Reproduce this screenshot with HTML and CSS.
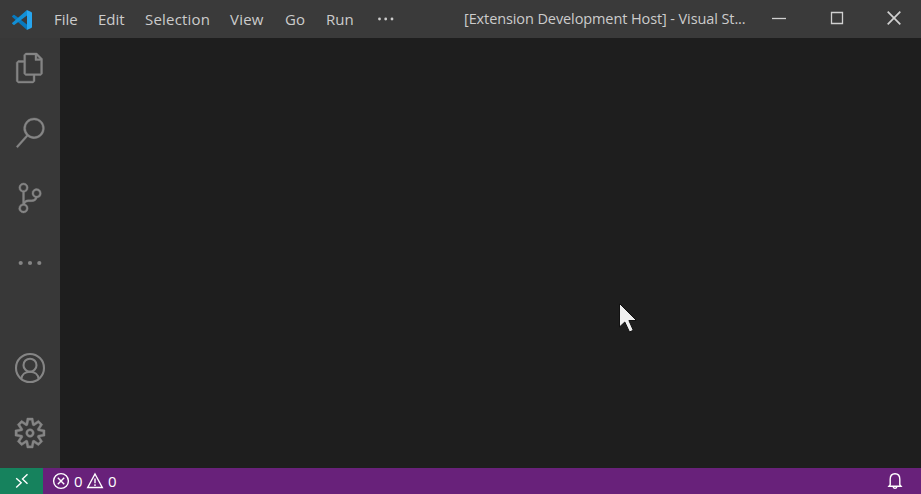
FILE: index.html
```
<!DOCTYPE html>
<html lang="en">
<head>
<meta charset="utf-8">
<title>Extension Development Host</title>
<link rel="stylesheet" href="styles.css">
</head>
<body>
<div class="window">
  <header class="titlebar">
    <svg class="logo" viewBox="0 0 20 20"><path fill="#0879be" d="M0 6.2 1.4 5Q2 4.7 2.6 5.1L15 14.5V20L.3 7Q0 6.6 0 6.2Z"/><path fill="#128fd5" d="M0 13.5 1.4 14.8Q2 15.2 2.6 14.7L15 5.5V0L.3 12.8Q0 13.1 0 13.5Z"/><path fill="#27a5ee" d="M14.8 0 19.3 2Q20 2.4 20 3V17Q20 17.6 19.3 18L14.8 20Q15 19.8 15 19V1Q15 .2 14.8 0Z"/></svg>
    <nav class="menu">
      <span class="file">File</span><span class="edit">Edit</span><span class="selection">Selection</span><span class="view">View</span><span class="go">Go</span><span class="run">Run</span>
      <svg class="more" viewBox="0 0 18 4"><circle cx="2.5" cy="2" r="1.4"/><circle cx="8.7" cy="2" r="1.4"/><circle cx="15" cy="2" r="1.4"/></svg>
    </nav>
    <div class="title">[Extension Development Host] - Visual St...</div>
    <div class="controls">
      <svg viewBox="0 0 16 16"><path d="M1 8.5H15"/></svg>
      <svg viewBox="0 0 16 16"><path d="M2.5 2.5H13.5V13.5H2.5Z"/></svg>
      <svg viewBox="0 0 16 16"><path class="close" d="M1.7 1.7 14.3 14.3M14.3 1.7 1.7 14.3"/></svg>
    </div>
  </header>
  <main class="body">
    <aside class="activity">
      <div class="group">
        <svg class="glyph" viewBox="0 0 24 24"><path d="M17.5 0h-9L7 1.5V6H2.5L1 7.5v15.07L2.5 24h12.07L16 22.57V18h4.7l1.3-1.43V4.5L17.5 0zm0 2.12l2.38 2.38H17.5V2.12zm-3 20.38h-12v-15H7v9.07L8.5 18h6v4.5zm6-6h-12v-15H16V6h4.5v10.5z"/></svg>
        <svg class="glyph" viewBox="0 0 24 24"><path d="M15.25 0a8.25 8.25 0 0 0-6.18 13.72L1 22.88l1.12 1 8.05-9.12A8.251 8.251 0 1 0 15.25.01V0zm0 15a6.75 6.75 0 1 1 0-13.5 6.75 6.75 0 0 1 0 13.5z"/></svg>
        <svg class="glyph" viewBox="0 0 24 24"><path d="M21.007 8.222A3.738 3.738 0 0 0 15.045 5.2a3.737 3.737 0 0 0 1.156 6.583 2.988 2.988 0 0 1-2.668 1.67h-2.99a4.456 4.456 0 0 0-2.989 1.165V7.4a3.737 3.737 0 1 0-1.494 0v9.117a3.776 3.776 0 1 0 1.816.099 2.99 2.99 0 0 1 2.668-1.667h2.99a4.484 4.484 0 0 0 4.223-3.039 3.736 3.736 0 0 0 3.25-3.687zM4.565 3.738a2.242 2.242 0 1 1 4.484 0 2.242 2.242 0 0 1-4.484 0zm4.484 16.441a2.242 2.242 0 1 1-4.484 0 2.242 2.242 0 0 1 4.484 0zm8.221-9.715a2.242 2.242 0 1 1 0-4.485 2.242 2.242 0 0 1 0 4.485z"/></svg>
        <svg viewBox="0 0 30 30"><circle cx="5.7" cy="15" r="2.1"/><circle cx="15" cy="15" r="2.1"/><circle cx="24.3" cy="15" r="2.1"/></svg>
      </div>
      <div class="group">
        <svg class="line" viewBox="0 0 30 30"><circle cx="15" cy="15" r="14"/><circle cx="15" cy="12.2" r="6.5"/><path d="M6.3 26C6.8 21.8 10 18.7 15 18.7S23.2 21.8 23.7 26"/></svg>
        <svg class="glyph" viewBox="0 0 24 24"><path fill-rule="evenodd" d="M19.85 8.75l4.15.83v4.84l-4.15.83 2.35 3.52-3.43 3.43-3.52-2.35-.83 4.15H9.58l-.83-4.15-3.52 2.35-3.43-3.43 2.35-3.52L0 14.42V9.58l4.15-.83L1.8 5.23 5.23 1.8l3.52 2.35L9.58 0h4.84l.83 4.15 3.52-2.35 3.43 3.43-2.35 3.52zm-1.57 5.07l4-.81v-2l-4-.81-.54-1.3 2.29-3.43-1.43-1.43-3.43 2.29-1.3-.54-.81-4h-2l-.81 4-1.3.54-3.43-2.29-1.43 1.43L6.38 8.9l-.54 1.3-4 .81v2l4 .81.54 1.3-2.29 3.43 1.43 1.43 3.43-2.29 1.3.54.81 4h2l.81-4 1.3-.54 3.43 2.29 1.43-1.43-2.29-3.43.54-1.3zm-8.186-4.672A3.43 3.43 0 0 1 12 8.57 3.44 3.44 0 0 1 15.43 12a3.43 3.43 0 1 1-5.336-2.852zm.956 4.274c.281.188.612.288.95.288A1.7 1.7 0 0 0 13.71 12a1.71 1.71 0 1 0-2.66 1.422z"/></svg>
      </div>
    </aside>
    <section class="editor"></section>
  </main>
  <footer class="status">
    <div class="remote"><svg viewBox="0 0 14 16"><path d="M1.2 5.2 6.2 9.8 1.2 14.5M12.5 1.2 7.5 6 12.5 10.7"/></svg></div>
    <div class="problems">
      <svg class="error" viewBox="0 0 18 18"><circle cx="9" cy="9" r="7.4"/><path d="M5.8 5.8 12.2 12.2M12.2 5.8 5.8 12.2"/></svg><span>0</span>
      <svg class="warning" viewBox="0 0 18 18"><path d="M9 2 16.3 15.5H1.7ZM9 6.5V11.2M9 12.2V14"/></svg><span>0</span>
    </div>
    <svg class="bell" viewBox="0 0 16 18"><path d="M3.2 12.8V7.2C3.2 3.8 5.2 1.8 8 1.8S12.8 3.8 12.8 7.2V12.8L14 14.2H2ZM6.2 14.8Q6.5 16.3 8 16.3T9.8 14.8"/></svg>
  </footer>
  <svg class="cursor" viewBox="0 0 18 30"><path d="M.5 .5V24L5.8 19 10.5 29 14.3 27.3 9.9 17.5H17.5Z"/></svg>
</div>
</body>
</html>
```
FILE: styles.css
```
* { box-sizing: border-box; }
body { margin: 0; font: 15px/20px "Open Sans", "Noto Sans", sans-serif; color: #ccc; }
svg { display: block; flex: none; }
.window { position: relative; width: 921px; height: 494px; display: flex; flex-direction: column; overflow: hidden; background: #1e1e1e; }
.titlebar { height: 38px; background: #3a3a3a; display: flex; align-items: center; padding-left: 12px; white-space: nowrap; }
.logo { width: 20px; height: 20px; margin-top: 2px; }
.menu { display: flex; align-items: center; width: 411px; padding-left: 22px; }
.menu span { flex: none; }
.file { width: 44px; }
.edit { width: 47px; }
.selection { width: 85px; letter-spacing: .2px; }
.view { width: 55px; letter-spacing: .2px; }
.go { width: 41px; }
.run { width: 51px; }
.more { width: 18px; height: 4px; fill: #ccc; }
.title { width: 307px; padding-left: 21px; font-size: 14.5px; letter-spacing: -.1px; margin-top: -1px; }
.controls { display: flex; width: 171px; }
.controls svg { width: 16px; height: 16px; margin: -2px 20.5px 0 21px; fill: none; stroke: #d0d0d0; stroke-width: 1.3; }
.controls .close { stroke-width: 1.7; }
.body { flex: 1; display: flex; }
.activity { width: 60px; background: #383838; padding: 15px 15px 20px; display: flex; flex-direction: column; justify-content: space-between; }
.group { display: grid; gap: 35px; }
.group svg { width: 30px; height: 30px; fill: #858585; overflow: visible; }
.group .glyph { stroke: #858585; stroke-width: .3; }
.group .line { fill: none; stroke: #858585; stroke-width: 2.1; }
.editor { flex: 1; background: #1e1e1e; }
.status { height: 26px; background: #68217a; color: #fff; display: flex; align-items: center; }
.status svg { fill: none; stroke: #fff; stroke-width: 1.4; }
.remote { width: 43px; height: 26px; background: #16825d; display: grid; place-items: center; }
.remote svg { width: 14px; height: 16px; }
.problems { display: flex; align-items: center; padding-left: 9px; }
.problems svg { width: 18px; height: 18px; }
.problems span { width: 9px; margin: 0 3px 0 4px; }
.bell { width: 16px; height: 18px; margin: 0 18px 0 auto; }
.cursor { position: absolute; left: 619px; top: 303px; width: 18px; height: 30px; fill: #f0f0f0; stroke: #111; }
```
